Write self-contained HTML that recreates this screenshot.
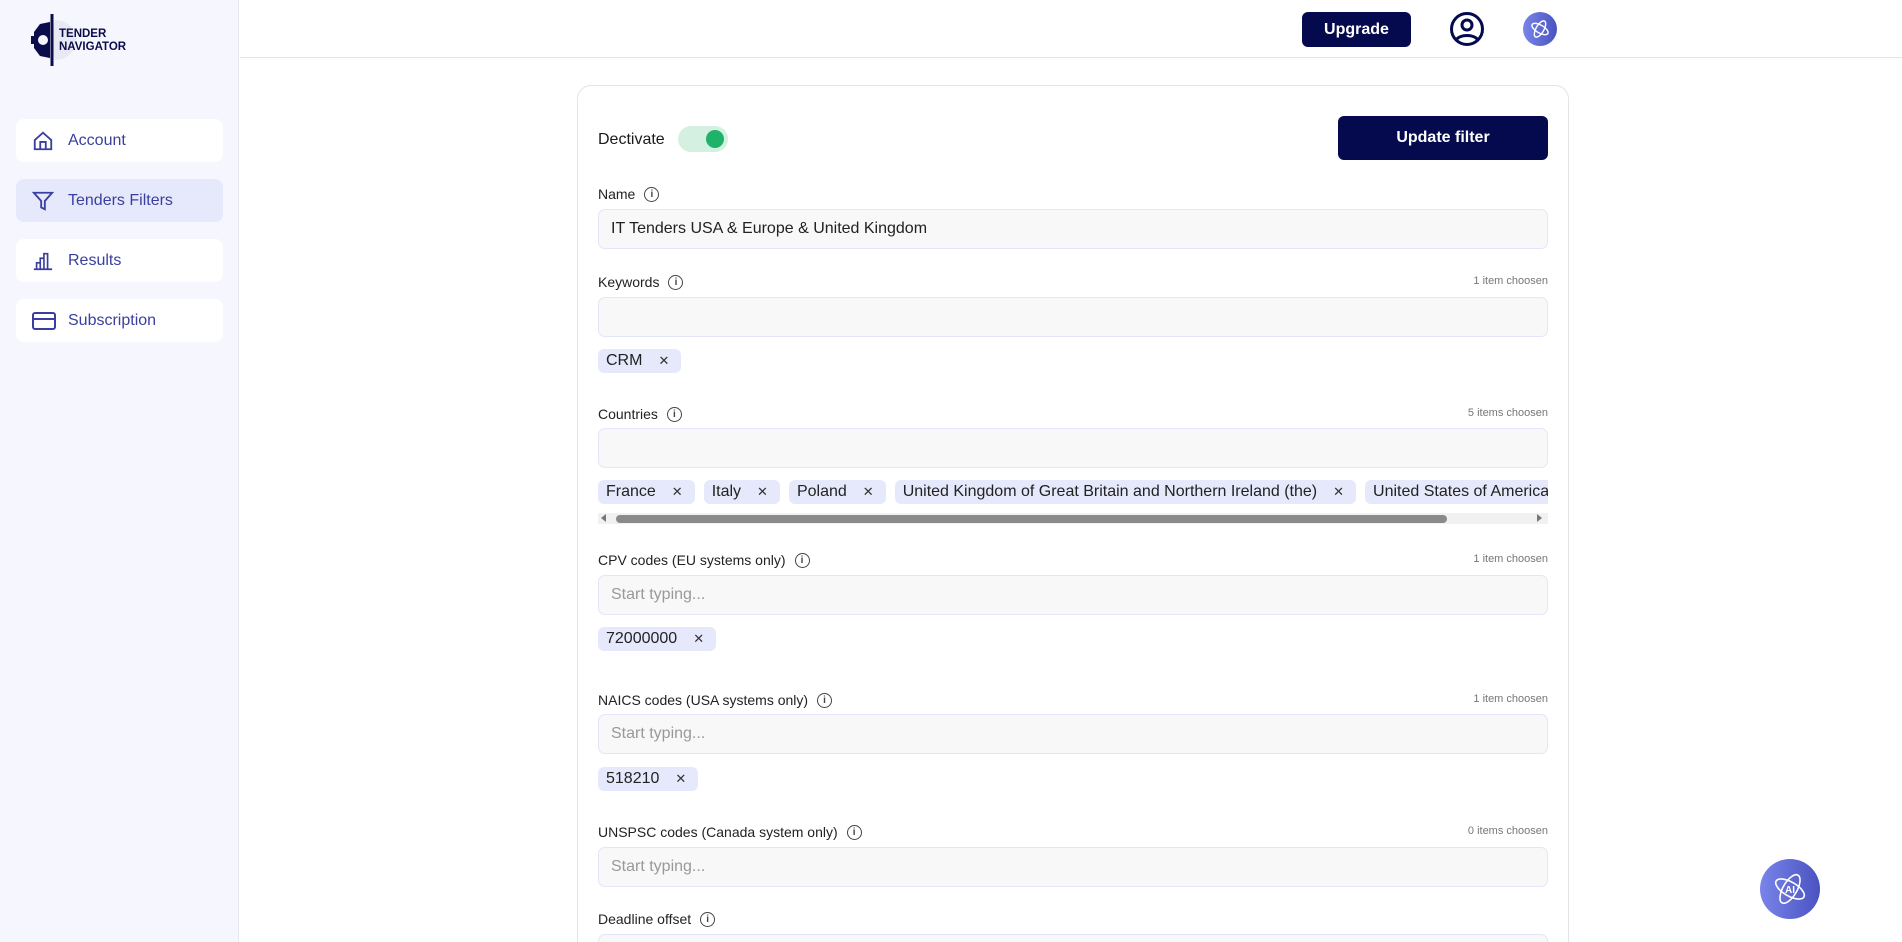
<!DOCTYPE html>
<html><head><meta charset="utf-8"><style>
*{box-sizing:border-box;margin:0;padding:0}
html,body{width:1902px;height:942px;overflow:hidden}
body{background:#fff;font-family:"Liberation Sans",Arial,sans-serif;color:#1a1a1a;position:relative}
.side{position:absolute;left:0;top:0;width:239px;height:942px;background:#f5f6fe;border-right:1px solid #e6e7ef}
.nav{position:absolute;left:16px;width:207px;height:43px;background:#fff;border-radius:8px;display:flex;align-items:center;padding-left:52px;color:#3a3f9f;font-size:16px}
.nav.act{background:#e6e9fb}
.nav svg{position:absolute;left:16px;top:11px}
.top{position:absolute;left:240px;top:0;right:0;height:58px;border-bottom:1px solid #e3e3e8}
.card{position:absolute;left:577px;top:85px;width:992px;height:880px;border:1px solid #e3e3e8;border-radius:14px}
.a{position:absolute}
.lbl{position:absolute;left:598px;font-size:14px;color:#222;display:flex;align-items:center;gap:9px}
.info{width:15px;height:15px;border:1.5px solid #444;border-radius:50%;font-size:10px;display:inline-flex;align-items:center;justify-content:center;font-weight:bold;color:#444}
.cnt{position:absolute;right:354px;font-size:11px;color:#777}
.inp{position:absolute;left:598px;width:950px;height:40px;background:#f8f8f9;border:1px solid #e4e5fa;border-radius:7px;font-size:16px;padding-left:12px;display:flex;align-items:center;color:#222}
.ph{color:#999}
.chip{background:#e6e9fb;border-radius:6px;height:24px;font-size:16px;display:inline-flex;align-items:center;padding:0 12px 0 8px;white-space:nowrap;color:#222;flex:none}
.chip i{font-style:normal;font-size:13px;margin-left:16px;color:#333}
.row{position:absolute;left:598px;display:flex;gap:9px}
</style></head><body>
<div class="side">
 <svg class="a" style="left:28px;top:14px" width="48" height="52" viewBox="0 0 48 52"><circle cx="28" cy="26" r="20" fill="#e8e9f3"/><path d="M24 0v52" stroke="#0b0c4a" stroke-width="3"/><path d="M22 8l-10 2-6 8 0 16 6 8 10 2z" fill="#0b0c4a"/><circle cx="15" cy="26" r="5" fill="#f5f6fe"/><path d="M3 22h6v8H3z" fill="#0b0c4a"/></svg>
 <div class="a" style="left:59px;top:28px;font-size:11.5px;font-weight:bold;color:#0b0c4a;line-height:13px">TENDER<br>NAVIGATOR</div>
 <div class="nav" style="top:119px"><svg width="22" height="22" viewBox="0 0 24 24" fill="none" stroke="#3a3f9f" stroke-width="2"><path d="M3 11l9-8 9 8v10H3z"/><path d="M9 21v-8h6v8"/></svg>Account</div>
 <div class="nav act" style="top:179px"><svg width="22" height="22" viewBox="0 0 24 24" fill="none" stroke="#3a3f9f" stroke-width="2"><path d="M2 3h20l-8 9v9l-4-2v-7z"/></svg>Tenders Filters</div>
 <div class="nav" style="top:239px"><svg width="22" height="22" viewBox="0 0 24 24" fill="none" stroke="#3a3f9f" stroke-width="1.8"><path d="M2 21h20M5 21v-7h4v7M9 21V9h4v12M13 21V4h4v17"/></svg>Results</div>
 <div class="nav" style="top:299px"><svg width="24" height="22" viewBox="0 0 24 22" fill="none" stroke="#3a3f9f" stroke-width="2"><rect x="1" y="3" width="22" height="16" rx="2"/><path d="M1 9h22"/></svg>Subscription</div>
</div>
<div class="top"></div>
<div class="a" style="left:1302px;top:12px;width:109px;height:35px;background:#050a4f;border-radius:6px;color:#fff;font-weight:bold;font-size:16px;display:flex;align-items:center;justify-content:center">Upgrade</div>
<svg class="a" style="left:1449px;top:11px" width="36" height="36" viewBox="0 0 36 36" fill="none" stroke="#050a4f" stroke-width="3"><circle cx="18" cy="18" r="15.5"/><circle cx="18" cy="14" r="5"/><path d="M7 29c4-6 18-6 22 0"/></svg>
<div class="a" style="left:1523px;top:12px;width:34px;height:34px;border-radius:50%;background:linear-gradient(90deg,#7985ea,#4a52c0)"><svg width="34" height="34" viewBox="0 0 60 60" fill="none" stroke="#fff" stroke-width="2.5"><ellipse cx="30" cy="30" rx="16" ry="7" transform="rotate(30 30 30)"/><ellipse cx="30" cy="30" rx="16" ry="7" transform="rotate(-60 30 30)"/></svg></div>
<div class="card"></div>
<div class="a" style="left:598px;top:131px;font-size:16px">Dectivate</div>
<div class="a" style="left:678px;top:126px;width:50px;height:26px;border-radius:13px;background:#d4f0e0"><div class="a" style="left:28px;top:4px;width:18px;height:18px;border-radius:50%;background:#1fb36a"></div></div>
<div class="a" style="left:1338px;top:116px;width:210px;height:44px;background:#050a4f;border-radius:6px;color:#fff;font-weight:bold;font-size:16px;display:flex;align-items:center;justify-content:center">Update filter</div>

<div class="lbl" style="top:186px">Name <span class="info">i</span></div>
<div class="inp" style="top:209px">IT Tenders USA &amp; Europe &amp; United Kingdom</div>

<div class="lbl" style="top:274px">Keywords <span class="info">i</span></div><div class="cnt" style="top:275px">1 item choosen</div>
<div class="inp" style="top:297px"></div>
<div class="row" style="top:349px"><span class="chip">CRM<i>✕</i></span></div>

<div class="lbl" style="top:406px">Countries <span class="info">i</span></div><div class="cnt" style="top:407px">5 items choosen</div>
<div class="inp" style="top:428px"></div>
<div class="row" style="top:480px;width:950px;overflow:hidden"><span class="chip">France<i>✕</i></span><span class="chip">Italy<i>✕</i></span><span class="chip">Poland<i>✕</i></span><span class="chip">United Kingdom of Great Britain and Northern Ireland (the)<i>✕</i></span><span class="chip">United States of America<i>✕</i></span></div>
<div class="a" style="left:598px;top:513px;width:950px;height:11px;background:#f1f1f1"></div>
<div class="a" style="left:616px;top:515px;width:831px;height:8px;border-radius:4px;background:#8a8a8a"></div>
<div class="a" style="left:601px;top:514px;border:4px solid transparent;border-right:5px solid #777;border-left:0"></div>
<div class="a" style="left:1537px;top:514px;border:4px solid transparent;border-left:5px solid #777;border-right:0"></div>

<div class="lbl" style="top:552px">CPV codes (EU systems only) <span class="info">i</span></div><div class="cnt" style="top:553px">1 item choosen</div>
<div class="inp ph" style="top:575px">Start typing...</div>
<div class="row" style="top:627px"><span class="chip">72000000<i>✕</i></span></div>

<div class="lbl" style="top:692px">NAICS codes (USA systems only) <span class="info">i</span></div><div class="cnt" style="top:693px">1 item choosen</div>
<div class="inp ph" style="top:714px">Start typing...</div>
<div class="row" style="top:767px"><span class="chip">518210<i>✕</i></span></div>

<div class="lbl" style="top:824px">UNSPSC codes (Canada system only) <span class="info">i</span></div><div class="cnt" style="top:825px">0 items choosen</div>
<div class="inp ph" style="top:847px">Start typing...</div>

<div class="lbl" style="top:911px">Deadline offset <span class="info">i</span></div>
<div class="inp" style="top:934px"></div>

<div class="a" style="left:1760px;top:859px;width:60px;height:60px;border-radius:50%;background:linear-gradient(90deg,#7985ea,#4a52c0)">
<svg width="60" height="60" viewBox="0 0 60 60" fill="none" stroke="#fff" stroke-width="1.6"><ellipse cx="30" cy="30" rx="16" ry="7" transform="rotate(30 30 30)"/><ellipse cx="30" cy="30" rx="16" ry="7" transform="rotate(-60 30 30)"/><text x="30" y="34" fill="#fff" stroke="none" font-size="10" font-weight="bold" text-anchor="middle" font-family="Liberation Sans">AI</text></svg></div>
</body></html>
